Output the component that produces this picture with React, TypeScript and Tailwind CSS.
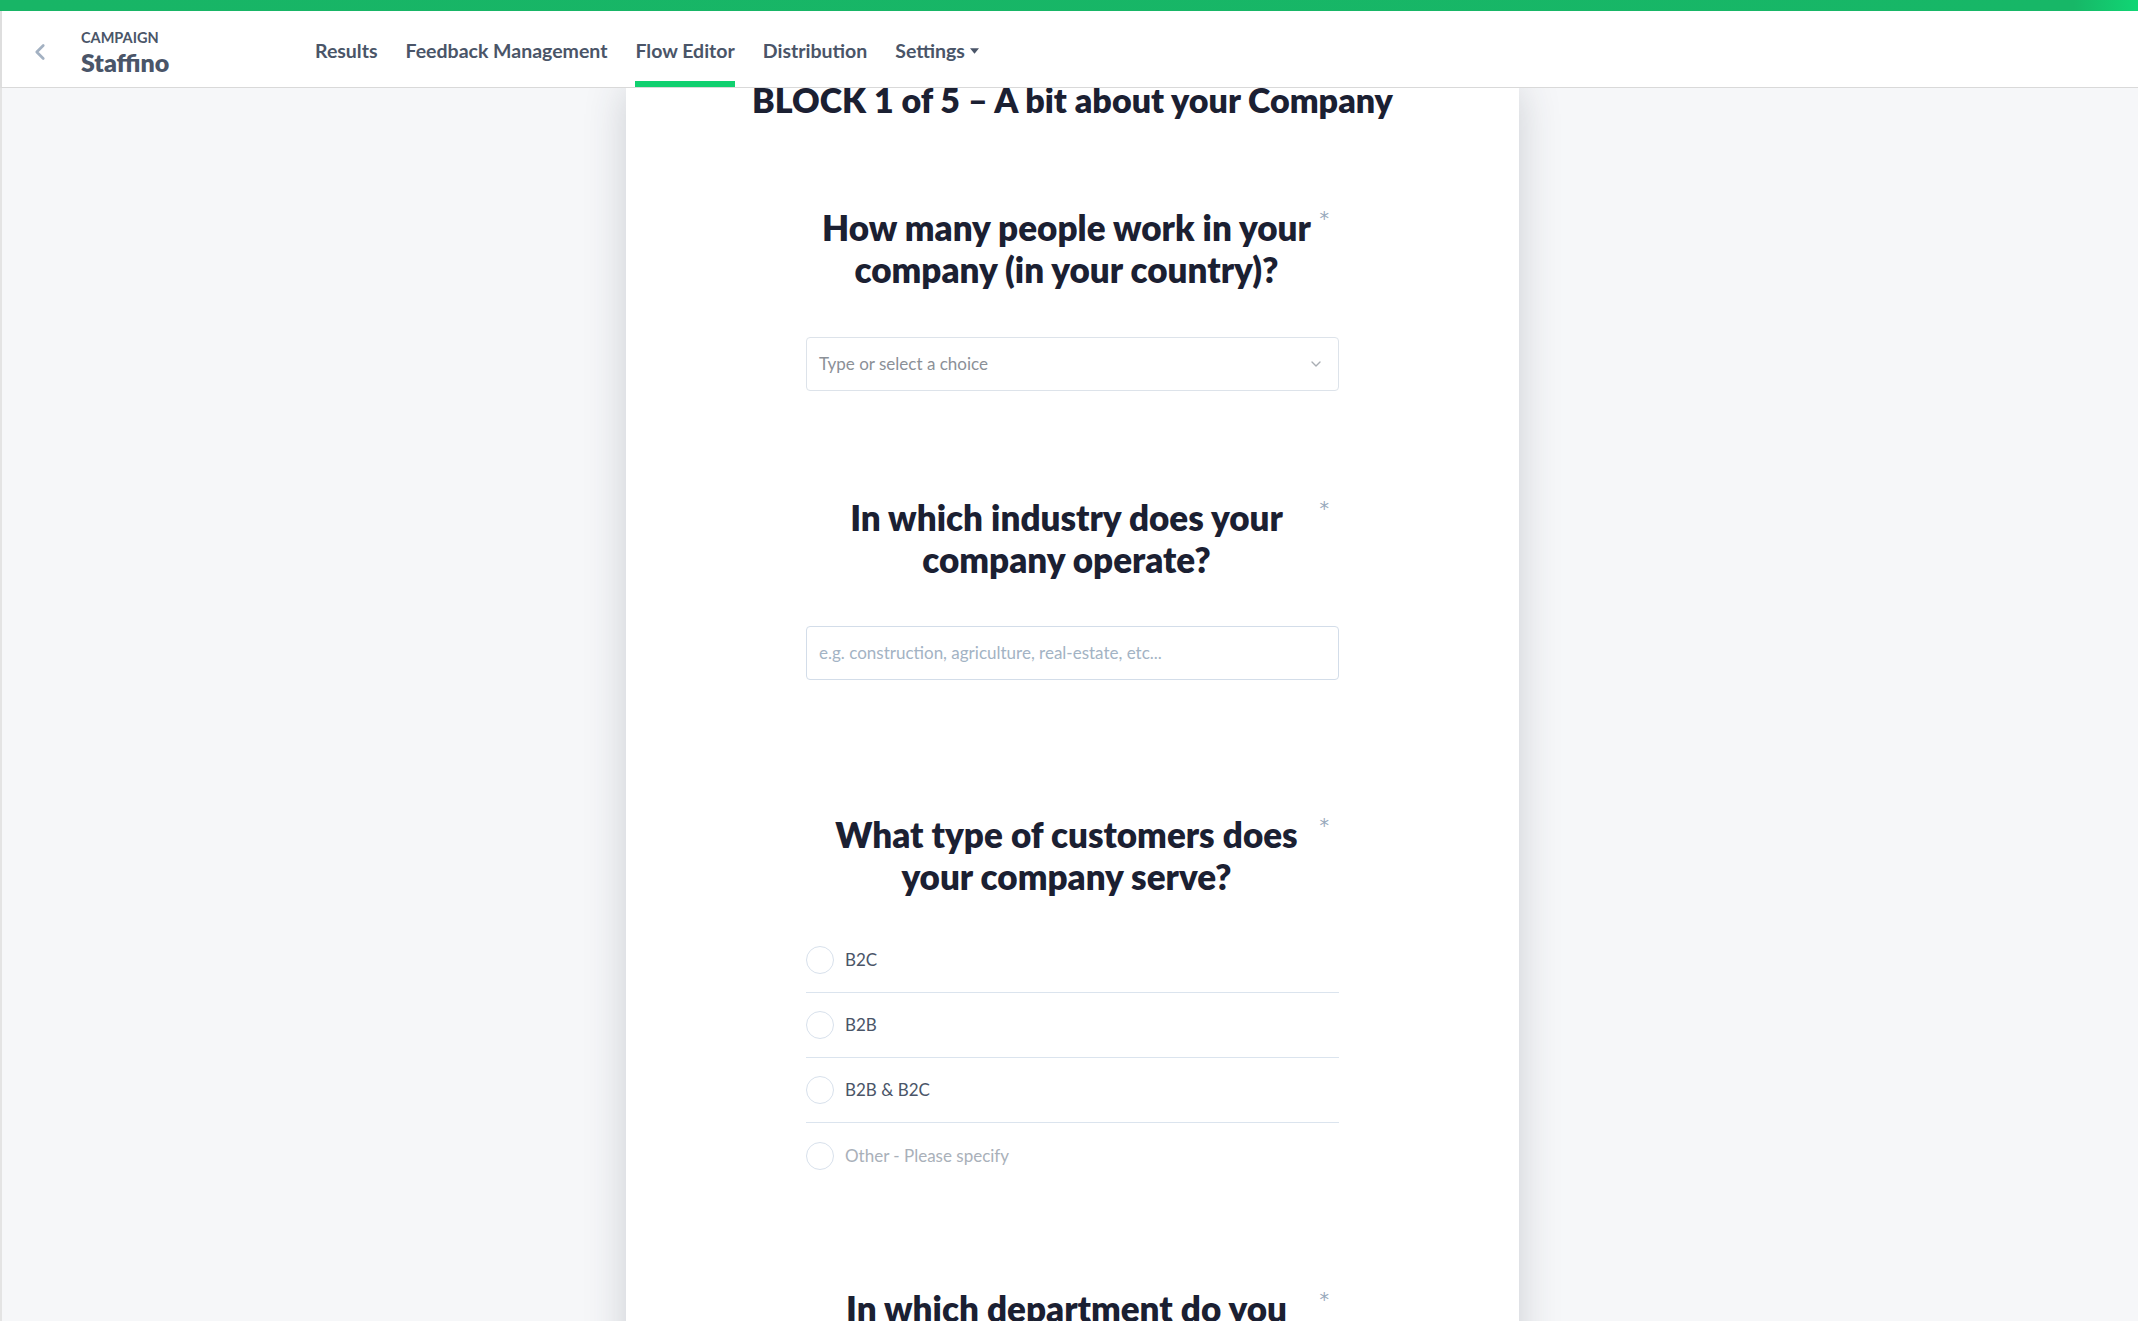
import { ChevronDown, ChevronLeft } from 'lucide-react';

const navItems = ['Results', 'Feedback Management', 'Flow Editor', 'Distribution', 'Settings'];

function Question({ lines, className = '' }: { lines: string[]; className?: string }) {
    return (
        <div className={`relative pr-[12px] text-center ${className}`}>
            {lines.map((line) => (
                <div key={line} className="text-[35px] font-extrabold leading-[42px] text-[#1b2032]">
                    {line}
                </div>
            ))}
            <span className="absolute right-[10px] top-[3px] font-['DejaVu_Sans',sans-serif] text-[19px] leading-[19px] text-[#98a9bc]">
                *
            </span>
        </div>
    );
}

function RadioRow({ label, muted, last }: { label: string; muted?: boolean; last?: boolean }) {
    return (
        <div className={`flex h-[65px] items-center gap-[11px] ${last ? '' : 'border-b border-[#dbe4ee]'}`}>
            <span className="h-[28px] w-[28px] shrink-0 rounded-full border-[1.5px] border-[#d8e1ec] bg-white" />
            <span className={`text-[17px] ${muted ? 'text-[#a9b0b9]' : 'text-[#4a5568]'}`}>{label}</span>
        </div>
    );
}

export default function App() {
    return (
        <div className="flex h-[1321px] flex-col overflow-hidden bg-[#f6f7f9] font-['Lato',sans-serif]">
            <div className="h-[11px] shrink-0 bg-[linear-gradient(90deg,#18b566_0%,#17b767_97%,#10d674_100%)]" />

            <header className="relative z-10 flex h-[77px] shrink-0 items-stretch border-b border-l-2 border-b-[#d9d9d9] border-l-[#dedede] bg-white">
                <div className="flex w-[313px] shrink-0 items-center pt-[7px]">
                    <ChevronLeft className="ml-[25px] mt-[-2px] h-[26px] w-[26px] text-[#a3b1c2]" strokeWidth={2.5} />
                    <div className="ml-[28px] flex flex-col">
                        <span className="text-[14.5px] font-bold uppercase leading-[18px] text-[#4a5568]">Campaign</span>
                        <span className="text-[25px] font-extrabold leading-[30px] text-[#4a5568]">Staffino</span>
                    </div>
                </div>
                <nav className="flex items-stretch gap-[28px]">
                    {navItems.map((item) => (
                        <div key={item} className="relative flex items-center pt-[3px]">
                            <span className="text-[19.5px] font-bold text-[#4a5568]">{item}</span>
                            {item === 'Settings' && (
                                <svg viewBox="0 0 10 6" className="ml-[5px] h-[6px] w-[9px] text-[#4a5568]">
                                    <path d="M0 0h10L5 6z" fill="currentColor" />
                                </svg>
                            )}
                            {item === 'Flow Editor' && (
                                <span className="absolute bottom-0 left-0 right-0 h-[6px] bg-[#10d06f]" />
                            )}
                        </div>
                    ))}
                </nav>
            </header>

            <main className="flex flex-1 justify-center border-l-2 border-[#e4e4e4] pl-[5px]">
                <div className="flex w-[893px] flex-col items-center bg-white shadow-[0_0_40px_rgba(40,52,66,0.2)]">
                    <h1 className="text-[34px] font-extrabold leading-[24px] text-[#1b2032]">
                        BLOCK 1 of 5 – A bit about your Company
                    </h1>

                    <div className="w-[533px]">
                        <Question className="mt-[94px]" lines={['How many people work in your', 'company (in your country)?']} />

                        <div className="mt-[47px] flex h-[54px] items-center justify-between rounded-[4px] border border-[#dde3ea] pl-[12px] pr-[14px]">
                            <span className="text-[17px] text-[#8b9097]">Type or select a choice</span>
                            <ChevronDown className="h-[16px] w-[16px] text-[#a8adb3]" strokeWidth={2} />
                        </div>

                        <Question className="mt-[105px]" lines={['In which industry does your', 'company operate?']} />

                        <div className="mt-[46px] flex h-[54px] items-center rounded-[4px] border border-[#d3dde9] pl-[12px]">
                            <span className="text-[17px] text-[#a3b3c4]">e.g. construction, agriculture, real-estate, etc...</span>
                        </div>

                        <Question className="mt-[133px]" lines={['What type of customers does', 'your company serve?']} />

                        <div className="mt-[31px] flex flex-col">
                            <RadioRow label="B2C" />
                            <RadioRow label="B2B" />
                            <RadioRow label="B2B & B2C" />
                            <RadioRow label="Other - Please specify" muted last />
                        </div>

                        <Question className="mt-[99px]" lines={['In which department do you', 'work?']} />
                    </div>
                </div>
            </main>
        </div>
    );
}
